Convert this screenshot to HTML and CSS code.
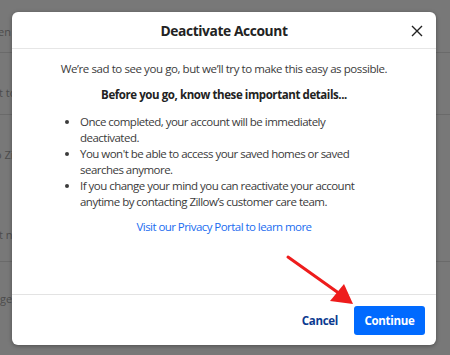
FILE: index.html
```html
<!DOCTYPE html>
<html>
<head>
<meta charset="utf-8">
<link rel="stylesheet" href="styles.css">
</head>
<body>
<div class="page">
  <div class="row r1"><span class="frag">Screen</span></div>
  <div class="row r2"><span class="frag">It to</span></div>
  <div class="row r3"><span class="frag">to Zillow</span><span class="frag f2">It no</span></div>
  <div class="row r4"><span class="frag">age</span></div>
</div>
<div class="overlay">
  <div class="modal">
    <div class="modal-header">
      <h2 class="title">Deactivate Account</h2>
      <button class="close" aria-label="Close">
        <svg width="12" height="12" viewBox="0 0 12 12"><path d="M1 1L11 11M11 1L1 11" stroke="#222" stroke-width="1.4" fill="none"/></svg>
      </button>
    </div>
    <div class="modal-body">
      <p class="intro">We’re sad to see you go, but we’ll try to make this easy as possible.</p>
      <p class="strong">Before you go, know these important details...</p>
      <ul class="list">
        <li>Once completed, your account will be immediately deactivated.</li>
        <li>You won't be able to access your saved homes or saved searches anymore.</li>
        <li>If you change your mind you can reactivate your account anytime by contacting Zillow’s customer care team.</li>
      </ul>
      <a class="link" href="#">Visit our Privacy Portal to learn more</a>
    </div>
    <div class="modal-footer">
      <button class="btn-cancel">Cancel</button>
      <button class="btn-continue">Continue</button>
    </div>
  </div>
  <svg class="arrow" width="450" height="355" viewBox="0 0 450 355">
    <line x1="288" y1="257" x2="340" y2="294" stroke="#ee1c1c" stroke-width="3" stroke-linecap="round"/>
    <polygon points="353,304 330,301 344,284" fill="#ee1c1c"/>
  </svg>
</div>
</body>
</html>
```
FILE: styles.css
```css
* { box-sizing: border-box; }
html, body { margin: 0; padding: 0; }
body {
  width: 450px;
  height: 355px;
  overflow: hidden;
  background: #787878;
  font-family: "Open Sans", "Noto Sans", sans-serif;
  position: relative;
}
.page { width: 450px; height: 355px; }
.row {
  border-bottom: 1px solid #6a6a6a;
  position: relative;
  font-size: 11px;
  color: #4c4c4c;
  white-space: nowrap;
}
.r1 { height: 53px; }
.r2 { height: 62px; }
.r3 { height: 147px; }
.r4 { height: 93px; border-bottom: none; }
.frag { display: block; }
.r1 .frag { padding-top: 24px; margin-left: -24px; }
.r2 .frag { padding-top: 32px; margin-left: -4px; }
.r3 .frag { padding-top: 32px; margin-left: -9px; }
.r3 .f2 { padding-top: 65px; margin-left: -4px; }
.r4 .frag { padding-top: 29px; margin-left: -6px; }

.overlay {
  position: absolute;
  inset: 0;
  display: flex;
  padding: 12px 14px 10px 12px;
}
.modal {
  width: 424px;
  height: 333px;
  background: #fff;
  border-radius: 6px;
  box-shadow: 0 1px 4px rgba(0,0,0,0.35);
  display: flex;
  flex-direction: column;
}
.modal-header {
  height: 37px;
  border-bottom: 1px solid #e6e6e6;
  display: flex;
  align-items: center;
  justify-content: center;
  position: relative;
}
.title {
  margin: 0;
  font-size: 13.8px;
  font-weight: 700;
  letter-spacing: -0.4px;
  color: #222;
}
.close {
  position: absolute;
  right: 13px;
  top: 13px;
  width: 12px;
  height: 12px;
  padding: 0;
  border: 0;
  background: none;
  display: flex;
}
.modal-body {
  flex: 1;
  padding: 12px 48px 0 48px;
  font-size: 11.5px;
  letter-spacing: -0.42px;
  line-height: 16px;
  color: #3b3b3b;
  text-align: center;
}
.intro { margin: 0; }
.strong { margin: 10px 0 0; font-weight: 700; color: #222; }
.list {
  margin: 11px 0 0;
  padding: 0 14px 0 20px;
  text-align: left;
  letter-spacing: -0.52px;
}
.list li { margin: 0; }
.link {
  display: block;
  margin-top: 9px;
  color: #1a6cf0;
  text-decoration: none;
  letter-spacing: -0.55px;
}
.modal-footer {
  height: 51px;
  border-top: 1px solid #e3e3e3;
  display: flex;
  align-items: center;
  justify-content: flex-end;
  padding-right: 11px;
  gap: 16px;
}
.btn-cancel {
  border: 0;
  background: none;
  font-family: inherit;
  font-size: 11.5px;
  letter-spacing: -0.3px;
  font-weight: 700;
  color: #0c3a90;
  padding: 0;
}
.btn-continue {
  width: 71px;
  height: 29px;
  border: 0;
  border-radius: 3px;
  background: #006aff;
  color: #fff;
  font-family: inherit;
  font-size: 11.5px;
  letter-spacing: -0.3px;
  font-weight: 700;
  padding: 0;
}
.arrow { position: absolute; left: 0; top: 0; pointer-events: none; }
```
